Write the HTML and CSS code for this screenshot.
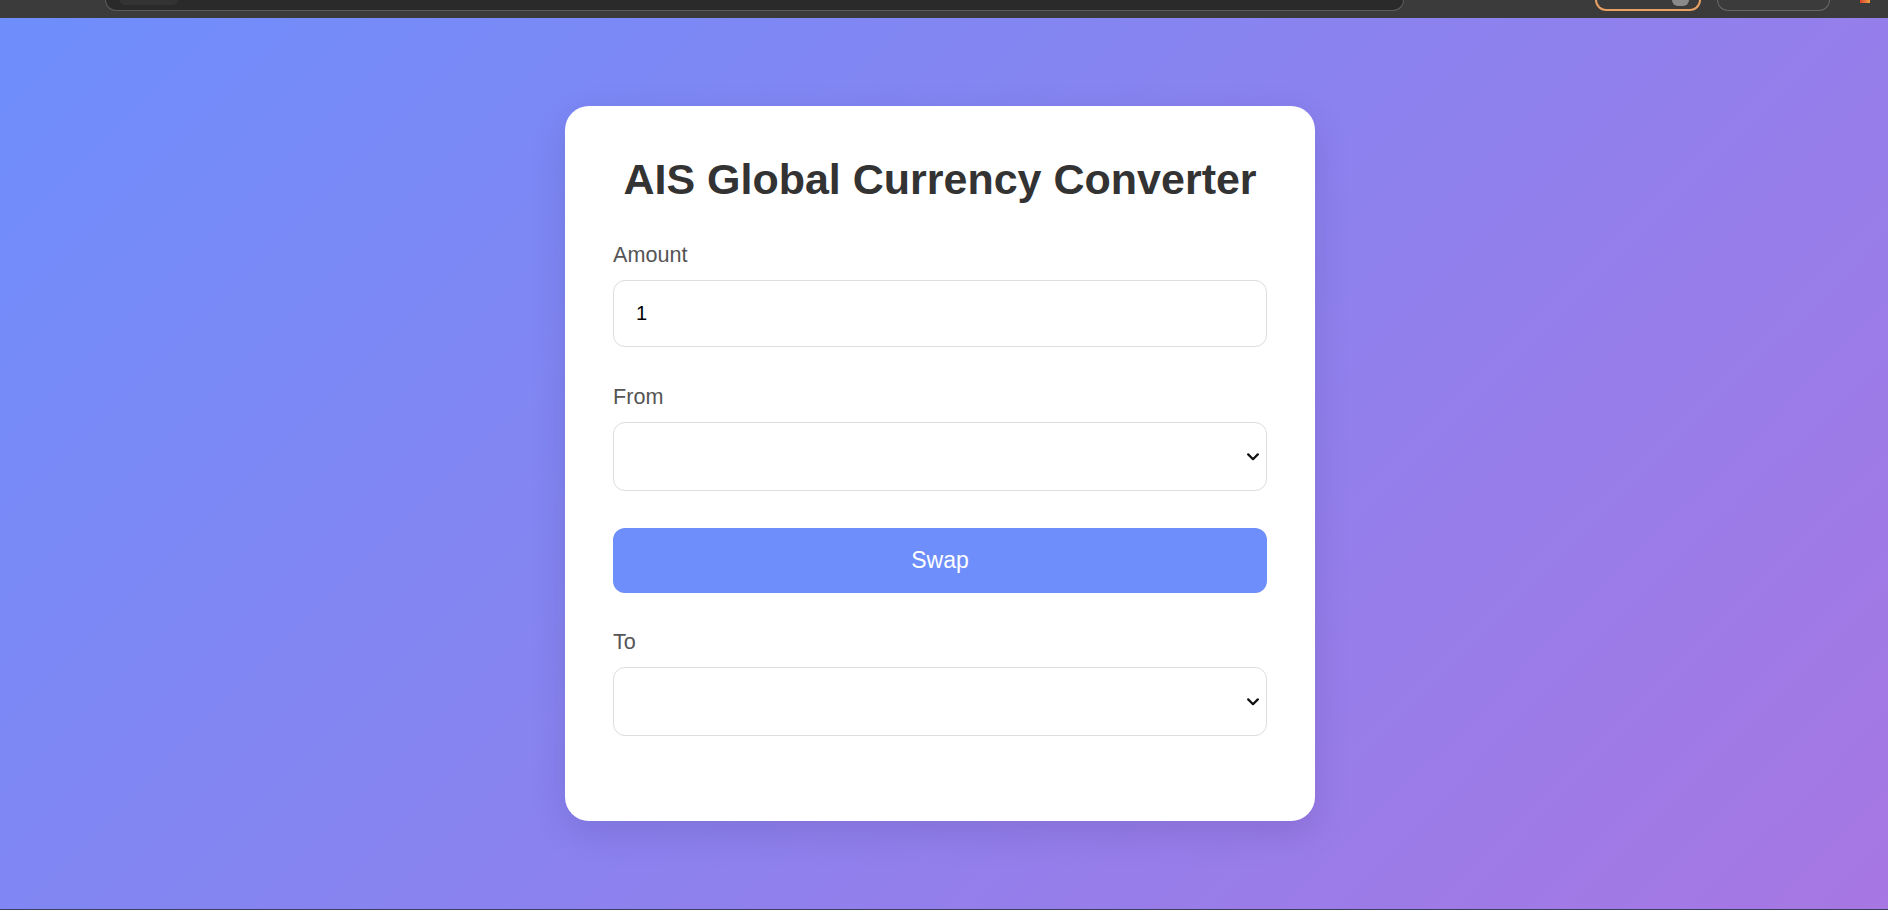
FILE: index.html
```html
<!DOCTYPE html>
<html lang="en">
<head>
<meta charset="utf-8">
<title>AIS Global Currency Converter</title>
<link rel="stylesheet" href="styles.css">
</head>
<body>
<div class="page">
  <div class="chrome">
    <div class="urlbar"><div class="urlbar-tab"></div></div>
    <div class="pill pill-accent"><span class="pill-dot"></span></div>
    <div class="pill"></div>
    <div class="chrome-icon"></div>
  </div>
  <main class="stage">
    <section class="card">
      <h1 class="title">AIS Global Currency Converter</h1>
      <div class="group">
        <label class="label" for="amount">Amount</label>
        <input class="field field-input" id="amount" type="text" value="1">
      </div>
      <div class="group">
        <label class="label" for="from">From</label>
        <div class="select-wrap">
          <select class="field field-select" id="from"></select>
          <svg class="chevron" width="12" height="8" viewBox="0 0 12 8" aria-hidden="true"><path d="M1.2 1.4 L6 6.2 L10.8 1.4" fill="none" stroke="#111" stroke-width="2.2" stroke-linecap="round" stroke-linejoin="round"/></svg>
        </div>
      </div>
      <button class="swap" type="button">Swap</button>
      <div class="group">
        <label class="label" for="to">To</label>
        <div class="select-wrap">
          <select class="field field-select" id="to"></select>
          <svg class="chevron" width="12" height="8" viewBox="0 0 12 8" aria-hidden="true"><path d="M1.2 1.4 L6 6.2 L10.8 1.4" fill="none" stroke="#111" stroke-width="2.2" stroke-linecap="round" stroke-linejoin="round"/></svg>
        </div>
      </div>
    </section>
  </main>
  <div class="bottom-edge"></div>
</div>
</body>
</html>
```

FILE: styles.css
```css
* { box-sizing: border-box; }

html, body {
  margin: 0;
  padding: 0;
  height: 100%;
}

body {
  font-family: "Liberation Sans", Arial, sans-serif;
  background: #3a3a3a;
  overflow: hidden;
}

.page {
  display: flex;
  flex-direction: column;
  height: 910px;
}

/* browser chrome strip at the top */
.chrome {
  height: 18px;
  flex: 0 0 18px;
  background: #3b3b3b;
  display: flex;
  align-items: flex-start;
}

.urlbar {
  margin-left: 105px;
  width: 1299px;
  height: 11px;
  background: #2a2a2a;
  border: 1px solid #5c5c5c;
  border-top: none;
  border-radius: 0 0 11px 11px;
  padding-left: 14px;
}

.urlbar-tab {
  width: 58px;
  height: 5px;
  background: #333;
  border-radius: 0 0 6px 6px;
}

.pill {
  margin-left: 16px;
  width: 113px;
  height: 11px;
  border: 1px solid #666;
  border-top: none;
  border-radius: 0 0 12px 12px;
  display: flex;
  justify-content: flex-end;
}

.pill-accent {
  margin-left: 191px;
  width: 106px;
  border: 2px solid #e8a064;
  border-top: none;
  padding-right: 10px;
}

.pill-dot {
  width: 17px;
  height: 6px;
  background: #8a8a8a;
  border-radius: 0 0 9px 9px;
}

.chrome-icon {
  margin-left: 30px;
  width: 10px;
  height: 3px;
  background: linear-gradient(90deg, #d9432b, #f0a040);
}

/* main gradient area */
.stage {
  flex: 1;
  background: linear-gradient(135deg, #6e8efb 0%, #a777e3 100%);
  display: flex;
  align-items: center;
  justify-content: center;
  padding-right: 8px;
  padding-bottom: 1px;
}

.bottom-edge {
  flex: 0 0 1px;
  background: #3a3f5c;
}

.card {
  width: 750px;
  background: #fff;
  border-radius: 24px;
  padding: 48px;
  box-shadow: 0 12px 36px rgba(40, 20, 90, 0.14);
}

.title {
  margin: 0 0 38px;
  font-size: 43px;
  line-height: 50px;
  font-weight: 700;
  color: #333;
  text-align: center;
}

.group {
  margin-bottom: 37px;
}

.group:last-child {
  margin-bottom: 37px;
}

.label {
  display: block;
  font-size: 21.6px;
  line-height: 25px;
  margin-bottom: 13px;
  color: #555;
}

.field {
  display: block;
  width: 100%;
  border: 1px solid #ddd;
  border-radius: 12px;
  background: #fff;
  font-family: "Liberation Sans", Arial, sans-serif;
  font-size: 20px;
  color: #000;
  padding: 0 22px;
  outline: none;
}

.field-input {
  height: 67px;
}

.select-wrap {
  position: relative;
}

.field-select {
  height: 69px;
  -webkit-appearance: none;
  appearance: none;
}

.chevron {
  position: absolute;
  right: 8px;
  top: 31px;
  pointer-events: none;
}

.swap {
  display: block;
  width: 100%;
  height: 65px;
  margin: 1px 0 36px;
  border: none;
  border-radius: 12px;
  background: #6e8efb;
  color: #fff;
  font-family: "Liberation Sans", Arial, sans-serif;
  font-size: 23px;
  cursor: pointer;
}
```
